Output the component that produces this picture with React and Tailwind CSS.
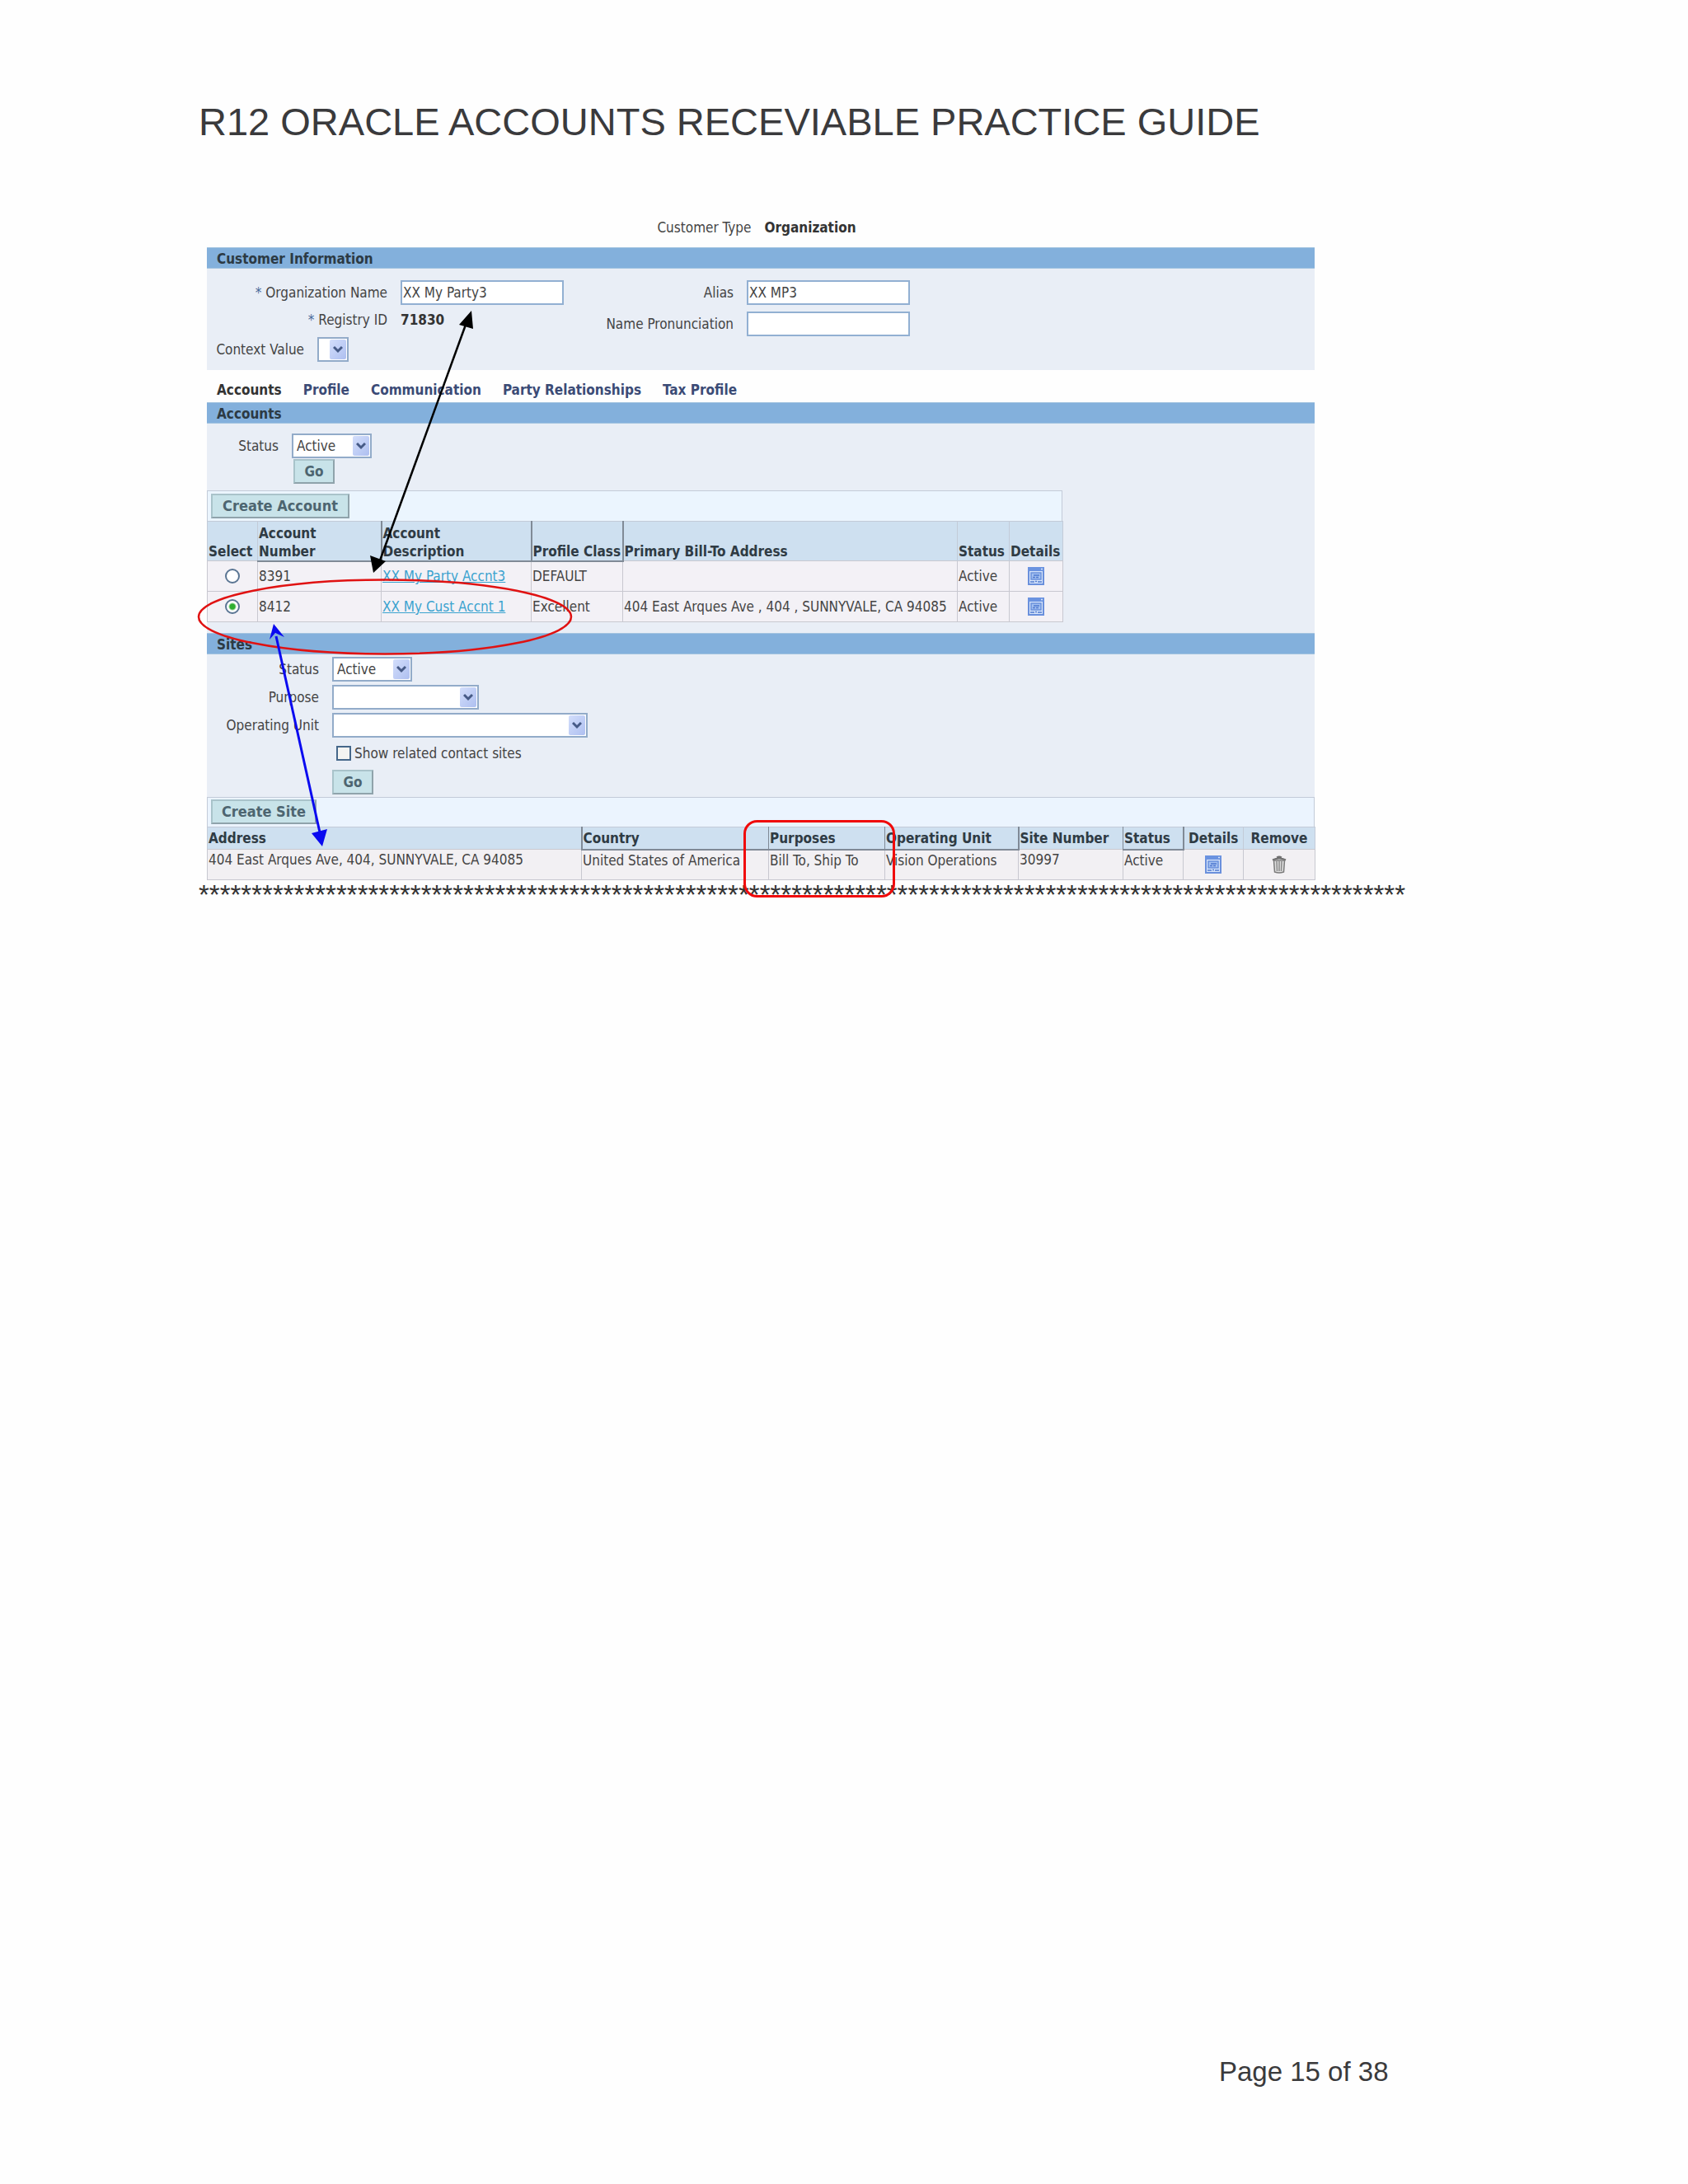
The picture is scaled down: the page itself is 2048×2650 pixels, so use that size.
import React from 'react';

// Data akun pelanggan
const accounts = [
  { id: '8391', description: 'XX My Party Accnt3', profile: 'DEFAULT', address: '', status: 'Active', selected: false },
  { id: '8412', description: 'XX My Cust Accnt 1', profile: 'Excellent', address: '404 East Arques Ave , 404 , SUNNYVALE, CA 94085', status: 'Active', selected: true },
];

const tabs = ['Profile', 'Communication', 'Party Relationships', 'Tax Profile'];

function SectionBar({ children }) {
  return (
    <h2 className="h-[26px] border-y border-[#a3c4e0] bg-[#83b0dc] pt-px pl-3 text-[17px] leading-6 font-bold text-[#2c3a44]">
      {children}
    </h2>
  );
}

function SelectBox({ id, value = '', className }) {
  return (
    <div className={`relative h-[30px] border-2 border-[#92abc9] bg-white ${className}`}>
      <select id={id} defaultValue={value} className="block h-full w-full appearance-none pl-1 text-[17px] leading-6 outline-none">
        <option value={value}>{value}</option>
      </select>
      <span className="pointer-events-none absolute top-px right-px flex h-6 w-5 items-center justify-center rounded-xs bg-linear-to-br from-[#d3defb] to-[#aebff0]">
        <svg width="12" height="10" viewBox="0 0 12 10" fill="none" stroke="#465a86" strokeWidth="3">
          <path d="M1 2l5 5 5-5" />
        </svg>
      </span>
    </div>
  );
}

function ActionButton({ children, className }) {
  return (
    <button type="button" className={`h-[30px] border-2 border-[#8fa3ab] border-t-[#a9c3ca] border-l-[#a9c3ca] bg-[#c8e3e9] leading-6 font-bold text-[#4d6570] ${className}`}>
      {children}
    </button>
  );
}

function DetailsIcon() {
  return (
    <svg className="mx-auto block" width="20" height="22" viewBox="0 0 20 22">
      <rect x="1" y="1" width="18" height="20" fill="#d6e4fa" stroke="#6a90dc" strokeWidth="2" />
      <rect x="0" y="0" width="20" height="5" fill="#6b93e0" />
      <path d="M16 2.500h2" stroke="#d6e4fa" strokeWidth="1.500" />
      <rect x="4" y="7" width="12" height="8" fill="#a3c0f0" stroke="#6a90dc" strokeWidth="1.500" />
      <path d="M7 10h7M6 12.500h3M10 12.500h3M3 18h5M9 17.500h2M12 18h5" stroke="#4f79cf" strokeWidth="1.500" />
    </svg>
  );
}

function TrashIcon() {
  return (
    <svg className="mx-auto block" width="18" height="22" viewBox="0 0 18 22">
      <path d="M6 2.500q3-2 6 0M1 5.500q8-4 16 0" fill="none" stroke="#6f6f6f" strokeWidth="2" />
      <path d="M2.500 6h13l-1 14q-5.500 2-11 0z" fill="#dedede" stroke="#7b7b7b" strokeWidth="1.500" />
      <path d="M6 7l.5 12M9 7v12M12 7l-.5 12" stroke="#8a8a8a" strokeWidth="1.500" />
    </svg>
  );
}

function App() {
  return (
    <div className="min-h-[2650px] bg-[#fefefe] pt-[120px] pl-[241px] font-['DejaVu_Sans_Condensed','Noto_Sans',sans-serif] text-[17px] leading-6 text-[#444]">
      <h1 className="font-['Liberation_Sans',sans-serif] text-[47px] leading-[56px] text-[#3a3a3c]">
        R12 ORACLE ACCOUNTS RECEVIABLE PRACTICE GUIDE
      </h1>

      <main className="relative pt-[88px]">
        <div className="ml-[10px] max-w-[1344px]">
          <p className="mb-3 flex justify-center gap-4 pr-[10px]">
            Customer Type <b className="text-[#333]">Organization</b>
          </p>

          {/* Customer information */}
          <section>
            <SectionBar>Customer Information</SectionBar>
            <div className="flex h-[123px] bg-[#e9eef6] pt-[14px]">
              <div className="w-[436px]">
                <div className="flex items-center">
                  <label htmlFor="org" className="w-[219px] text-right"><span className="text-[#4a6a9a]">*</span> Organization Name</label>
                  <input id="org" defaultValue="XX My Party3" className="ml-4 h-[30px] w-[198px] border-2 border-[#92b0d2] bg-white pl-px" />
                </div>
                <div className="mb-1 flex h-[35px] items-center">
                  <span className="w-[219px] text-right"><span className="text-[#4a6a9a]">*</span> Registry ID</span>
                  <b className="ml-4 text-[#333]">71830</b>
                </div>
                <div className="flex items-center">
                  <label htmlFor="context" className="w-[118px] text-right">Context Value</label>
                  <SelectBox id="context" className="ml-4 w-[38px]" />
                </div>
              </div>
              <div>
                <div className="mb-2 flex items-center">
                  <label htmlFor="alias" className="w-[203px] text-right">Alias</label>
                  <input id="alias" defaultValue="XX MP3" className="ml-4 h-[30px] w-[198px] border-2 border-[#92b0d2] bg-white pl-px" />
                </div>
                <div className="flex items-center">
                  <label htmlFor="pronunciation" className="w-[203px] text-right">Name Pronunciation</label>
                  <input id="pronunciation" className="ml-4 h-[30px] w-[198px] border-2 border-[#92b0d2] bg-white pl-px" />
                </div>
              </div>
            </div>
          </section>

          <nav className="flex h-[39px] items-center gap-[26px] pt-2 pl-3 font-bold text-[#3b4b76]">
            <span className="text-[#333]">Accounts</span>
            {tabs.map((tab) => (
              <a key={tab} href="#">{tab}</a>
            ))}
          </nav>

          {/* Accounts */}
          <section className="bg-[#e9eef6] pb-[13px]">
            <SectionBar>Accounts</SectionBar>
            <div className="flex items-center pt-3">
              <label htmlFor="account-status" className="w-[87px] text-right">Status</label>
              <SelectBox id="account-status" value="Active" className="ml-4 w-[97px]" />
            </div>
            <ActionButton className="mt-px ml-[105px] block w-[50px]">Go</ActionButton>

            <div className="mt-2 w-[1038px]">
              <div className="h-[37px] border border-b-0 border-[#c3cbd8] bg-[#ebf5fe] pt-[3px] pl-1">
                <ActionButton className="w-[168px] text-[18px]">Create Account</ActionButton>
              </div>
              <table className="w-full table-fixed border-collapse text-left">
                <colgroup>
                  <col className="w-[61px]" />
                  <col className="w-[150px]" />
                  <col className="w-[182px]" />
                  <col className="w-[111px]" />
                  <col className="w-[406px]" />
                  <col className="w-[63px]" />
                  <col className="w-[65px]" />
                </colgroup>
                <thead>
                  <tr className="h-12 border border-[#c3cbd8] bg-[#cee0f0] align-bottom leading-[22px] whitespace-nowrap text-[#2f3b44]">
                    <th className="border-r border-[#c3cbd8] pl-px">Select</th>
                    <th className="border-r-2 border-b-2 border-[#808a96] pl-px">Account<br />Number</th>
                    <th className="border-r-2 border-b-2 border-[#808a96] pl-px">Account<br />Description</th>
                    <th className="border-r-2 border-b-2 border-[#808a96] pl-px">Profile Class</th>
                    <th className="border-r border-[#c3cbd8] pl-px">Primary Bill-To Address</th>
                    <th className="border-r border-[#c3cbd8] pl-px">Status</th>
                    <th className="pl-px">Details</th>
                  </tr>
                </thead>
                <tbody>
                  {accounts.map((account) => (
                    <tr key={account.id} className="h-[37px] bg-[#f3f1f6] whitespace-nowrap">
                      <td className="border border-[#c8c8d0]">
                        <input
                          type="radio"
                          name="account"
                          aria-label={account.id}
                          defaultChecked={account.selected}
                          className="mx-auto block size-[18px] appearance-none rounded-full border-2 border-[#5a7593] bg-white checked:bg-[radial-gradient(circle,#2fae2f_0_3px,#fff_5px)]"
                        />
                      </td>
                      <td className="border border-[#c8c8d0] pl-px">{account.id}</td>
                      <td className="border border-[#c8c8d0] pl-px">
                        <a href="#" className="text-[#3ba3cf] underline">{account.description}</a>
                      </td>
                      <td className="border border-[#c8c8d0] pl-px">{account.profile}</td>
                      <td className="border border-[#c8c8d0] pl-px">{account.address}</td>
                      <td className="border border-[#c8c8d0] pl-px">{account.status}</td>
                      <td className="border border-[#c8c8d0]"><DetailsIcon /></td>
                    </tr>
                  ))}
                </tbody>
              </table>
            </div>
          </section>

          {/* Sites */}
          <section className="bg-[#e9eef6]">
            <SectionBar>Sites</SectionBar>
            <div className="grid grid-cols-[136px_1fr] items-center gap-x-4 gap-y-1 pt-[3px]">
              <label htmlFor="site-status" className="text-right">Status</label>
              <SelectBox id="site-status" value="Active" className="w-[97px]" />
              <label htmlFor="purpose" className="text-right">Purpose</label>
              <SelectBox id="purpose" className="w-[178px]" />
              <label htmlFor="unit" className="text-right">Operating Unit</label>
              <SelectBox id="unit" className="w-[310px]" />
              <label className="col-start-2 flex h-[30px] items-center gap-1 pl-[5px]">
                <input type="checkbox" className="size-[18px] appearance-none border-2 border-[#45678a] bg-[#f4f4f2]" />
                Show related contact sites
              </label>
              <ActionButton className="col-start-2 mt-px w-[50px]">Go</ActionButton>
            </div>

            <div className="mt-[3px] h-[36px] border border-b-0 border-[#c3cbd8] bg-[#ebf4fe] pt-[2px] pl-1">
              <ActionButton className="w-[128px] text-[18px]">Create Site</ActionButton>
            </div>
            <table className="w-full table-fixed border-collapse text-left">
              <colgroup>
                <col className="w-[454px]" />
                <col className="w-[227px]" />
                <col className="w-[141px]" />
                <col className="w-[162px]" />
                <col className="w-[127px]" />
                <col className="w-[73px]" />
                <col className="w-[73px]" />
                <col className="w-[87px]" />
              </colgroup>
              <thead>
                <tr className="h-[27px] border border-[#c3cbd8] bg-[#cee0f0] whitespace-nowrap text-[#2f3b44]">
                  <th className="border-r-2 border-[#808a96] pl-px">Address</th>
                  <th className="border-r border-b-2 border-[#808a96] pl-px">Country</th>
                  <th className="border-r border-b-2 border-[#808a96] pl-px">Purposes</th>
                  <th className="border-r-2 border-b-2 border-[#808a96] pl-px">Operating Unit</th>
                  <th className="border-r border-[#808a96] pl-px">Site Number</th>
                  <th className="border-r-2 border-b-2 border-[#808a96] pl-px">Status</th>
                  <th className="border-r border-[#c3cbd8] text-center">Details</th>
                  <th className="text-center">Remove</th>
                </tr>
              </thead>
              <tbody>
                <tr className="h-[37px] bg-[#f2f0f3] align-top whitespace-nowrap">
                  <td className="border border-[#c8c8d0] pl-px">404 East Arques Ave, 404, SUNNYVALE, CA 94085</td>
                  <td className="border border-[#c8c8d0] pl-px">United States of America</td>
                  <td className="border border-[#c8c8d0] pl-px">Bill To, Ship To</td>
                  <td className="border border-[#c8c8d0] pl-px">Vision Operations</td>
                  <td className="border border-[#c8c8d0] pl-px">30997</td>
                  <td className="border border-[#c8c8d0] pl-px">Active</td>
                  <td className="border border-[#c8c8d0] pt-[7px]"><DetailsIcon /></td>
                  <td className="border border-[#c8c8d0] pt-[7px]"><TrashIcon /></td>
                </tr>
              </tbody>
            </table>
          </section>
        </div>

        <p className="font-['Liberation_Sans',sans-serif] text-[33px] leading-9 whitespace-nowrap text-[#333]">
          {'*'.repeat(114)}
        </p>

        {/* Hand-drawn marks over the form */}
        <svg className="pointer-events-none absolute top-0 -left-2" width="900" height="940" viewBox="233 176 900 940" fill="none">
          <ellipse cx="467" cy="748.500" rx="226" ry="45" stroke="#e01212" strokeWidth="2.500" />
          <path d="M565 394L461 680" stroke="#000" strokeWidth="2.500" />
          <path d="M572 377l2 22-17-5zM453 695l-4-21 19 7z" fill="#000" />
          <path d="M335 772L388 1010" stroke="#0a0af0" strokeWidth="3" />
          <path d="M332 757l13 16-11-5-7 8zM391 1027l-13-16 19-5z" fill="#0a0af0" />
          <rect x="903.500" y="996.500" width="181" height="91" rx="15" stroke="#f00a0a" strokeWidth="3" />
        </svg>
      </main>

      <footer className="pt-[1390px] pl-[1238px] font-['Liberation_Sans',sans-serif] text-[33px] leading-10 text-[#3a3a3c]">
        Page 15 of 38
      </footer>
    </div>
  );
}

export default App;
